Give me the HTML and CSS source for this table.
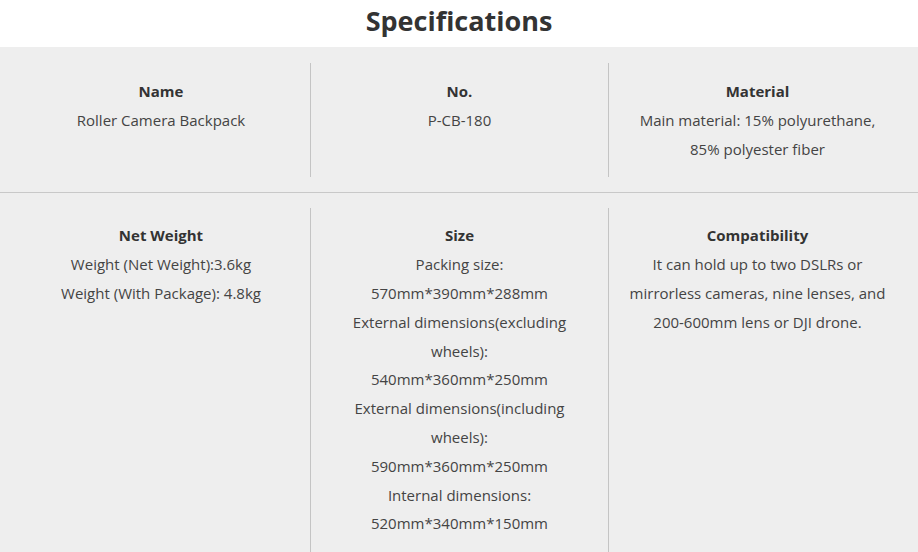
FILE: index.html
```html
<!DOCTYPE html>
<html>
<head>
<meta charset="utf-8">
<link rel="stylesheet" href="styles.css">
</head>
<body>
<header class="head"><h1 class="title">Specifications</h1></header>
<main class="specs">
  <section class="row row-first">
    <div class="cell"><h3>Name</h3><p>Roller Camera Backpack</p></div>
    <div class="cell"><h3>No.</h3><p>P-CB-180</p></div>
    <div class="cell"><h3>Material</h3><p>Main material: 15% polyurethane,<br>85% polyester fiber</p></div>
  </section>
  <section class="row row-second">
    <div class="cell"><h3>Net Weight</h3><p>Weight (Net Weight):3.6kg<br>Weight (With Package): 4.8kg</p></div>
    <div class="cell"><h3>Size</h3><p>Packing size:<br>570mm*390mm*288mm<br>External dimensions(excluding wheels):<br>540mm*360mm*250mm<br>External dimensions(including wheels):<br>590mm*360mm*250mm<br>Internal dimensions:<br>520mm*340mm*150mm</p></div>
    <div class="cell"><h3>Compatibility</h3><p>It can hold up to two DSLRs or mirrorless cameras, nine lenses, and 200-600mm lens or DJI drone.</p></div>
  </section>
</main>
</body>
</html>
```
FILE: styles.css
```css
html, body { margin: 0; padding: 0; }
body {
  font-family: "Open Sans", "Liberation Sans", sans-serif;
  background: #eeeeee;
  color: #444;
  width: 918px;
  height: 552px;
  overflow: hidden;
}
.head {
  background: #fff;
  height: 47px;
  display: flex;
  justify-content: center;
  align-items: center;
}
.title {
  margin: 0;
  font-size: 27px;
  font-weight: 700;
  color: #333;
  line-height: 1;
  position: relative;
  top: -3px;
}
.specs { padding: 0; }
.row {
  display: grid;
  grid-template-columns: repeat(3, 1fr);
  padding: 16px 12px 0;
}
.row-first {
  padding-bottom: 15px;
  border-bottom: 1px solid #c8c8c8;
}
.row-second { padding-top: 15px; }
.cell {
  padding: 14px 20px 14px;
  text-align: center;
  font-size: 15px;
  line-height: 28.8px;
}
.row-second .cell { padding-top: 13px; min-height: 400px; }
.cell + .cell { border-left: 1px solid #c4c4c4; }
.cell h3 {
  margin: 0;
  font-size: 15px;
  font-weight: 700;
  color: #333;
  line-height: 28.8px;
}
.cell p { margin: 0; }
```
